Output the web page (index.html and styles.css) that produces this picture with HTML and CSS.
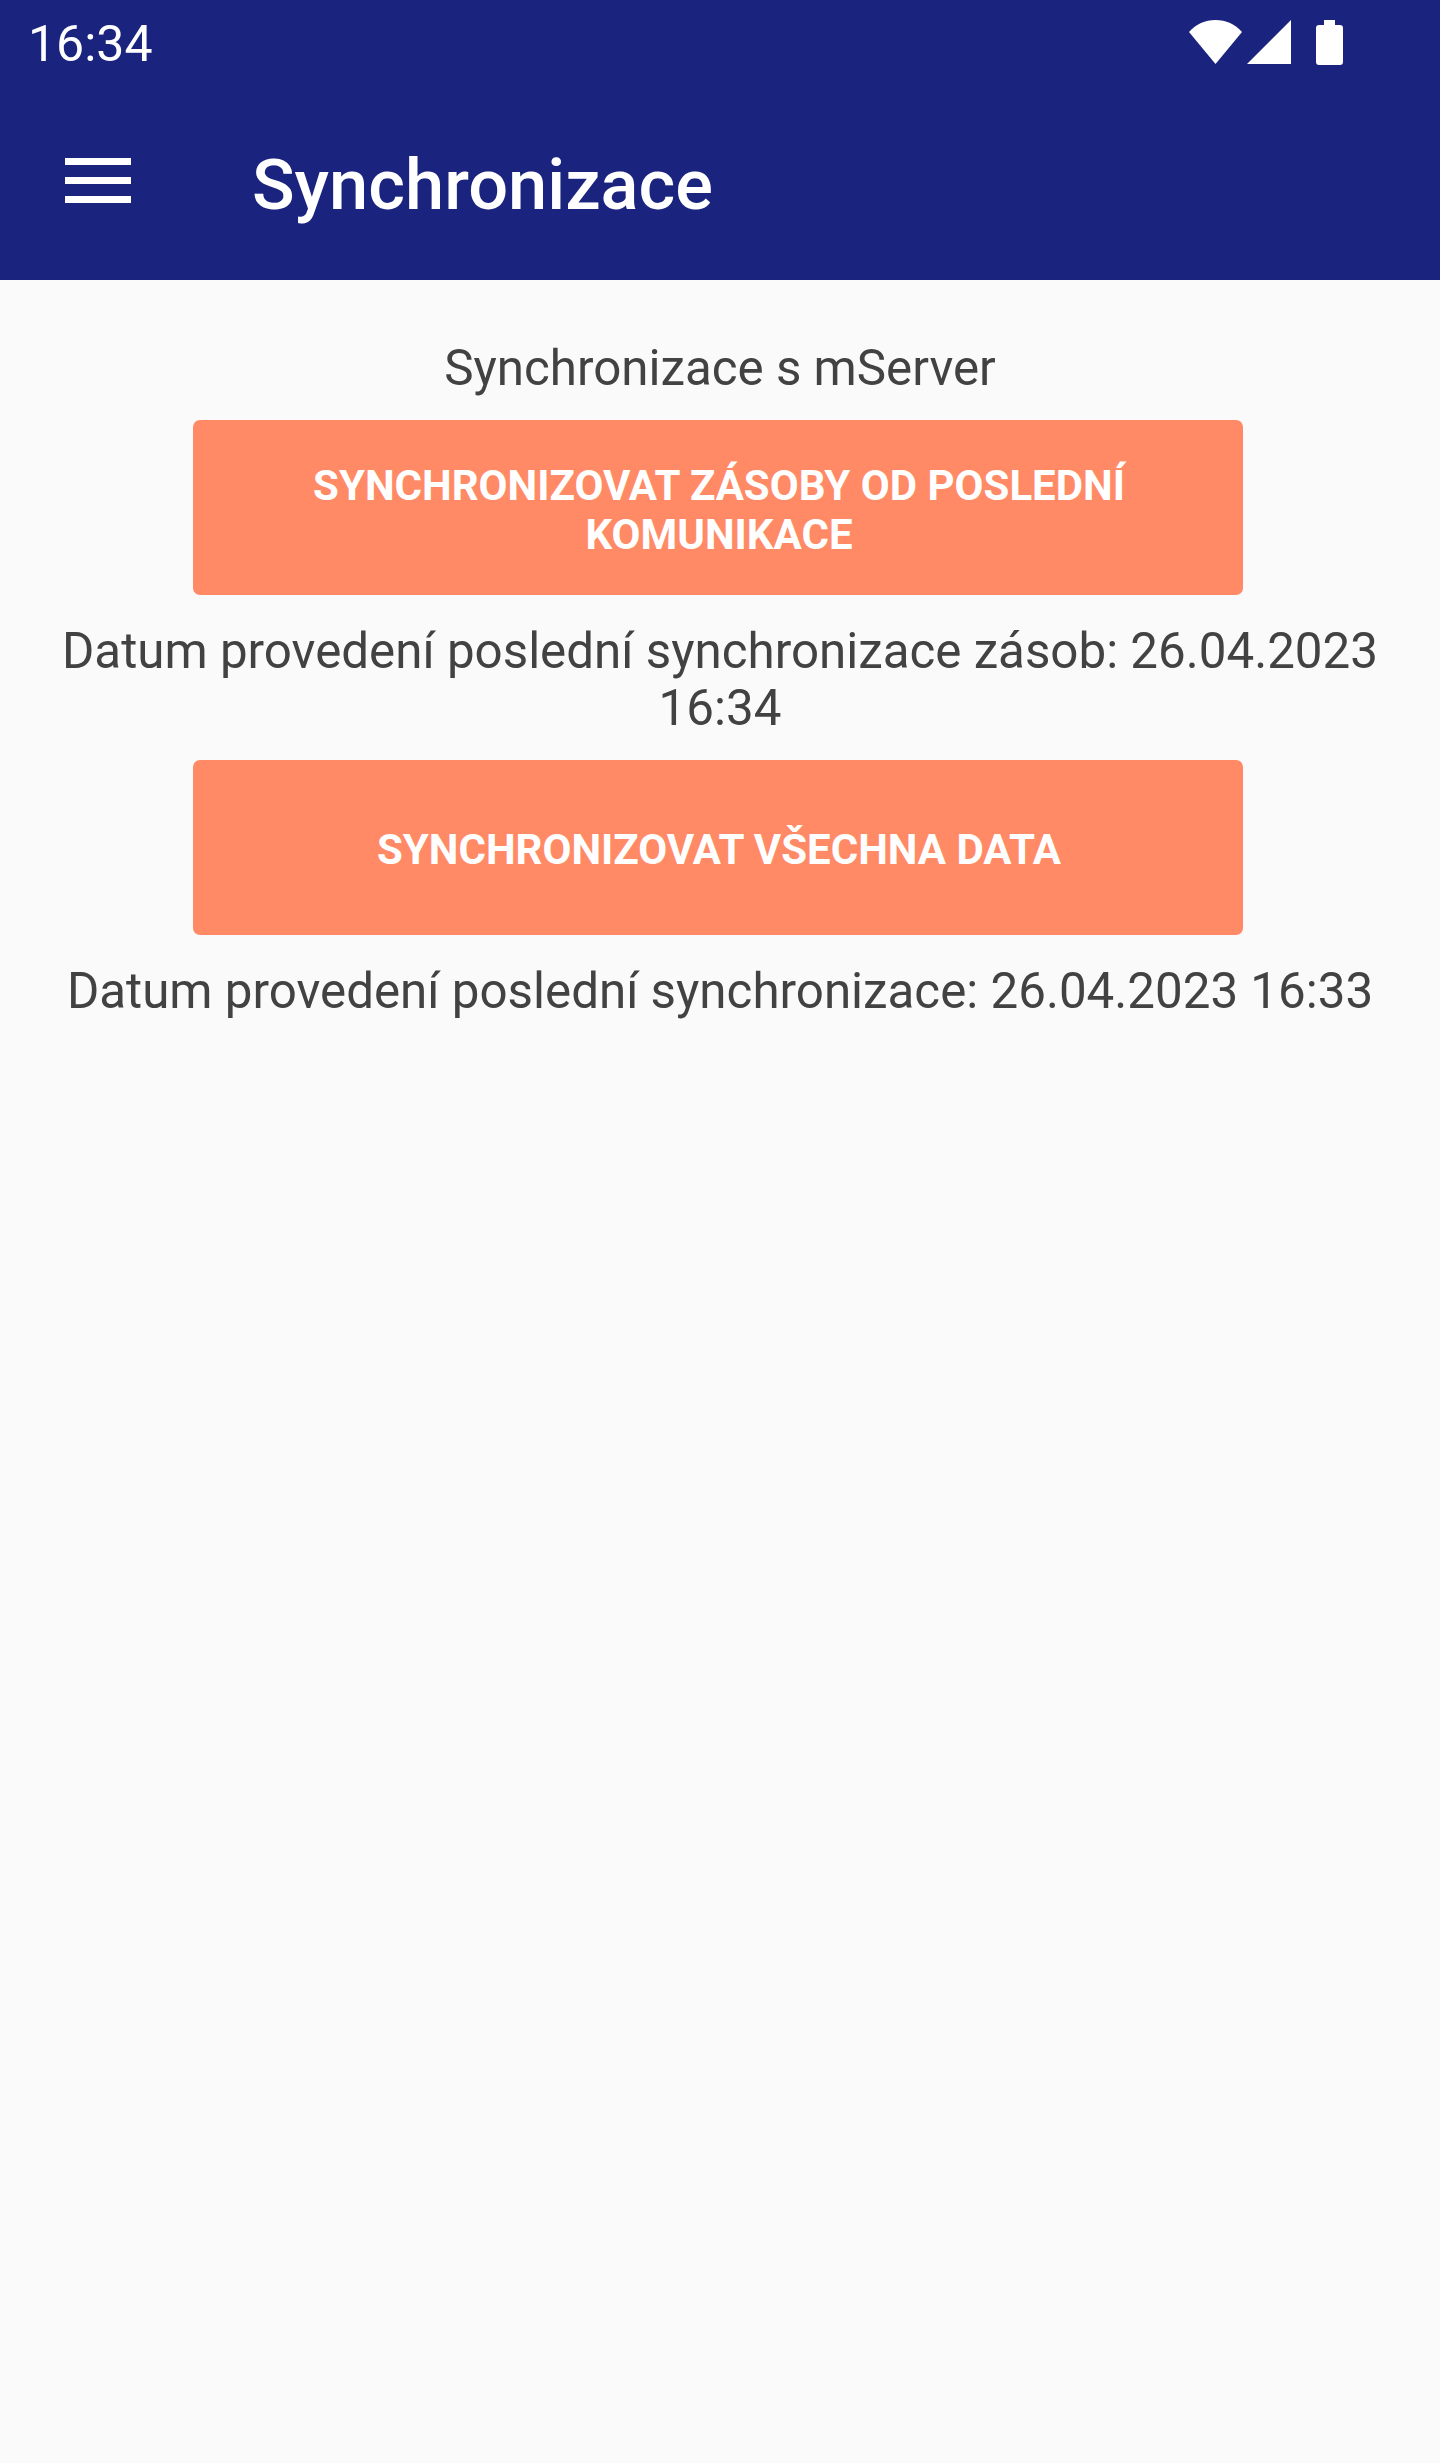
FILE: index.html
```html
<!DOCTYPE html>
<html lang="cs">
<head>
    <meta charset="UTF-8">
    <meta name="viewport" content="width=device-width, initial-scale=1.0">
    <title>Synchronizace</title>
    <link rel="stylesheet" href="styles.css">
</head>
<body>

    <header class="header">
        <!-- Status bar -->
        <div class="status-bar">
            <span class="status-time">16:34</span>
            <div class="status-icons">
                <svg class="icon-wifi" width="53" height="44" viewBox="0 0 53 44">
                    <path d="M0 12C7 4 16 0 26.5 0S46 4 53 12L26.5 44Z" fill="#fff"/>
                </svg>
                <svg class="icon-signal" width="44" height="44" viewBox="0 0 44 44">
                    <path d="M44 0V44H0Z" fill="#fff"/>
                </svg>
                <svg class="icon-battery" width="27" height="45" viewBox="0 0 27 45">
                    <path d="M8 0H19V5H24Q27 5 27 8V42Q27 45 24 45H3Q0 45 0 42V8Q0 5 3 5H8Z" fill="#fff"/>
                </svg>
            </div>
        </div>

        <!-- Toolbar -->
        <div class="toolbar">
            <div class="menu-icon">
                <span></span>
                <span></span>
                <span></span>
            </div>
            <h1>Synchronizace</h1>
        </div>
    </header>

    <main class="content">
        <p>Synchronizace s mServer</p>
        <button class="sync-btn">Synchronizovat zásoby od poslední komunikace</button>
        <p>Datum provedení poslední synchronizace zásob: 26.04.2023 16:34</p>
        <button class="sync-btn">Synchronizovat všechna data</button>
        <p>Datum provedení poslední synchronizace: 26.04.2023 16:33</p>
    </main>

</body>
</html>
```

FILE: styles.css
```css
/* General Styling */
body {
    margin: 0;
    min-height: 100vh;
    font-family: Roboto, "Liberation Sans", sans-serif;
    background-color: #fafafa;
    color: #424242;
}

/* Header */
.header {
    height: 280px;
    background-color: #1a237e;
    color: white;
}

.status-bar {
    height: 84px;
    display: flex;
    align-items: center;
    justify-content: space-between;
    padding: 0 97px 0 28px;
}

.status-time {
    padding-top: 3px;
    font-size: 50px;
    line-height: 84px;
}

.status-icons {
    display: flex;
    align-items: center;
}

.icon-signal {
    margin-left: 5px;
}

.icon-battery {
    margin-left: 25px;
}

.toolbar {
    height: 196px;
    display: flex;
    align-items: center;
}

.menu-icon {
    width: 66px;
    height: 45px;
    margin: 0 0 3px 65px;
    display: flex;
    flex-direction: column;
    justify-content: space-between;
}

.menu-icon span {
    height: 7px;
    background-color: white;
}

.toolbar h1 {
    margin: 0 0 0 121px;
    padding-top: 6px;
    font-size: 70.4px;
    font-weight: 500;
}

/* Content */
.content {
    padding: 60px 28px 0;
    display: flex;
    flex-direction: column;
    align-items: center;
    text-align: center;
}

.content p {
    margin: 0;
    font-size: 49.3px;
    line-height: 57px;
}

.sync-btn {
    width: 1050px;
    height: 175px;
    margin: 23px 4px 28px 0;
    padding: 4px 39px 0 41px;
    border: none;
    border-radius: 7px;
    background-color: #ff8a65;
    color: white;
    font-family: inherit;
    font-size: 42px;
    font-weight: 700;
    line-height: 49px;
    text-transform: uppercase;
}
```
